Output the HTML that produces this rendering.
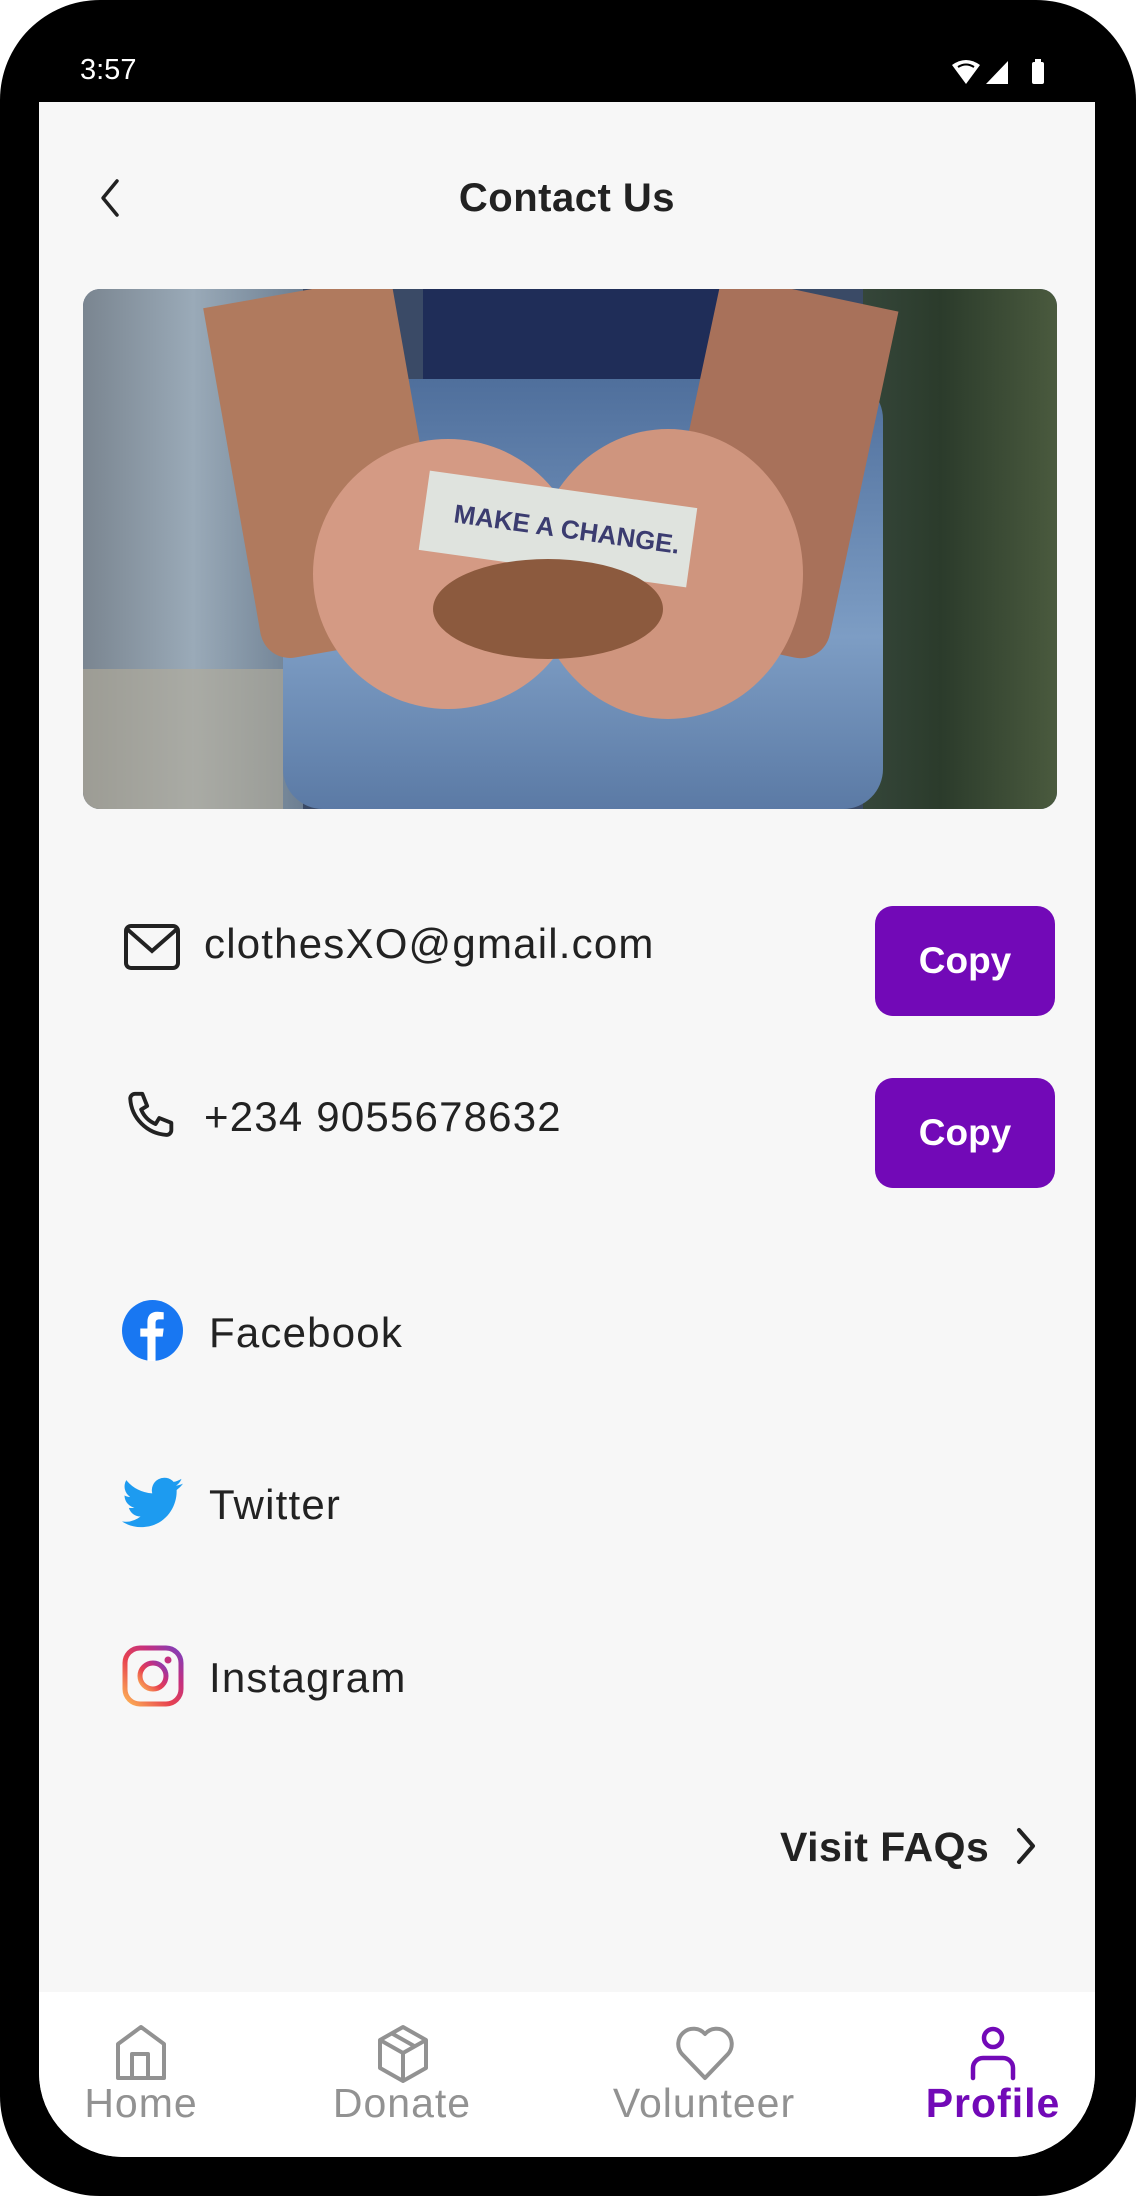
<!DOCTYPE html>
<html><head><meta charset="utf-8"><style>
*{margin:0;padding:0;box-sizing:border-box}
body{width:1136px;height:2196px;background:#fff;position:relative;overflow:hidden;font-family:"Liberation Sans",sans-serif;color:#222}
.phone{position:absolute;left:0;top:0;width:1136px;height:2196px;background:#000;border-radius:100px}
.screen{position:absolute;left:39px;top:102px;width:1056px;height:2055px;background:#f7f7f7;border-radius:0 0 84px 84px;overflow:hidden}
.abs{position:absolute}
.t{position:absolute;white-space:nowrap}
.row{font-size:42px;letter-spacing:1.2px}
.btn{position:absolute;left:836px;width:180px;height:110px;background:#7209b7;border-radius:18px;color:#fff;font-weight:bold;font-size:37px;display:flex;align-items:center;justify-content:center}
.nav{position:absolute;left:0;top:1890px;width:1056px;height:165px;background:#fff}
.lbl{position:absolute;top:2080px;font-size:41px;letter-spacing:1px;color:#929292;transform:translateX(-50%);white-space:nowrap}
</style></head><body>
<div class="phone"></div>
<div class="t" style="left:80px;top:54px;color:#fff;font-size:29px">3:57</div>
<svg class="abs" style="left:950px;top:58px" width="100" height="28" viewBox="0 0 100 28">
<path d="M2 7 Q16 -3 30 7 L16 26 Z" fill="#fff"/><path d="M8 9 Q16 4 24 9" stroke="#000" stroke-width="2" fill="none"/>
<path d="M36 26 L58 26 L58 3 Z" fill="#fff"/>
<rect x="82" y="4" width="12" height="22" rx="2" fill="#fff"/><rect x="85" y="1" width="6" height="4" fill="#fff"/>
</svg>
<div class="screen">
  <svg class="abs" style="left:56px;top:76px" width="30" height="40" viewBox="0 0 30 40"><path d="M22 3 L8 20 L22 37" stroke="#222" stroke-width="3.5" fill="none" stroke-linecap="round" stroke-linejoin="round"/></svg>
  <div class="t" style="left:0;width:1056px;text-align:center;top:74px;font-size:40px;font-weight:bold;color:#222;letter-spacing:.5px">Contact Us</div>
  <div class="abs" style="left:44px;top:187px;width:974px;height:520px;border-radius:17px;overflow:hidden;background:#3a4a66">
    <div class="abs" style="left:0;top:0;width:220px;height:520px;background:linear-gradient(90deg,#7a8590,#9aaab8 50%,#6d7f92)"></div>
    <div class="abs" style="left:0;top:380px;width:200px;height:140px;background:#b4ab98;opacity:.6"></div>
    <div class="abs" style="left:780px;top:0;width:194px;height:520px;background:linear-gradient(90deg,#35463a,#2b3b2b 40%,#4a5a3e)"></div>
    <div class="abs" style="left:340px;top:0;width:300px;height:160px;background:#1f2d58"></div>
    <div class="abs" style="left:200px;top:90px;width:600px;height:430px;background:linear-gradient(180deg,#4f6f9c,#7d9dc4 60%,#5b7aa5);border-radius:40px"></div>
    <div class="abs" style="left:150px;top:0;width:190px;height:360px;background:#b07a5e;border-radius:0 0 90px 30px;transform:rotate(-10deg)"></div>
    <div class="abs" style="left:600px;top:0;width:180px;height:360px;background:#a8715a;border-radius:0 0 30px 90px;transform:rotate(12deg)"></div>
    <div class="abs" style="left:230px;top:150px;width:270px;height:270px;background:#d49a84;border-radius:50%"></div>
    <div class="abs" style="left:450px;top:140px;width:270px;height:290px;background:#cf957e;border-radius:50%"></div>
    <div class="abs" style="left:340px;top:200px;width:270px;height:80px;background:#dfe3de;transform:rotate(8deg)"></div>
    <div class="t" style="left:370px;top:225px;font-size:26px;color:#3b3c70;font-weight:bold;transform:rotate(8deg)">MAKE A CHANGE.</div>
    <div class="abs" style="left:350px;top:270px;width:230px;height:100px;background:#8c5a3e;border-radius:50%"></div>
  </div>
  <svg class="abs" style="left:84px;top:821px" width="58" height="48" viewBox="0 0 58 48"><rect x="3" y="3" width="52" height="42" rx="5" fill="none" stroke="#222" stroke-width="4"/><path d="M4 6 L29 28 L54 6" fill="none" stroke="#222" stroke-width="4"/></svg>
  <div class="t row" style="left:165px;top:818px">clothesXO@gmail.com</div>
  <div class="btn" style="top:804px">Copy</div>
  <svg class="abs" style="left:84px;top:987px" width="58" height="58" viewBox="0 0 24 24"><path d="M5 2 h3 l2 5 -2.5 1.5 a11 11 0 0 0 6 6 L15 12 l5 2 v3 a2 2 0 0 1 -2 2 A16 16 0 0 1 3 4 a2 2 0 0 1 2 -2z" fill="none" stroke="#222" stroke-width="1.6" stroke-linejoin="round"/></svg>
  <div class="t row" style="left:165px;top:991px">+234 9055678632</div>
  <div class="btn" style="top:976px">Copy</div>
  <svg class="abs" style="left:83px;top:1198px" width="61" height="61" viewBox="0 0 60 60"><circle cx="30" cy="30" r="30" fill="#1877f2"/><path d="M33 60 V36 h7 l1-8 h-8 v-5 c0-3 1-4 4-4 h4 v-7 c-2 0-4-0.5-6-0.5 -7 0-10 4-10 10 v6.5 h-7 v8 h7 v24.5z" fill="#fff"/></svg>
  <div class="t row" style="left:170px;top:1207px">Facebook</div>
  <svg class="abs" style="left:83px;top:1375px" width="61" height="52" viewBox="0 0 24 20"><path d="M24 2.4c-.9.4-1.8.7-2.8.8 1-.6 1.8-1.6 2.2-2.7-1 .6-2 1-3.1 1.2A4.9 4.9 0 0 0 11.9 6.2 14 14 0 0 1 1.7 1a4.9 4.9 0 0 0 1.5 6.6c-.8 0-1.6-.2-2.2-.6 0 2.4 1.7 4.4 3.9 4.8-.7.2-1.5.2-2.2.1.6 2 2.4 3.4 4.6 3.4A9.9 9.9 0 0 1 0 17.3 14 14 0 0 0 7.5 19.5c9 0 14-7.5 14-14v-.6c1-.7 1.8-1.6 2.5-2.5z" fill="#1d9bf0"/></svg>
  <div class="t row" style="left:170px;top:1379px">Twitter</div>
  <svg class="abs" style="left:83px;top:1543px" width="62" height="62" viewBox="0 0 62 62"><defs><linearGradient id="ig" x1="0" y1="1" x2="1" y2="0"><stop offset="0" stop-color="#fdb555"/><stop offset=".4" stop-color="#e8434f"/><stop offset=".7" stop-color="#c4307f"/><stop offset="1" stop-color="#7b3fbf"/></linearGradient></defs><rect x="3" y="3" width="56" height="56" rx="15" fill="none" stroke="url(#ig)" stroke-width="5"/><circle cx="31" cy="31" r="13" fill="none" stroke="url(#ig)" stroke-width="5"/><circle cx="46" cy="15" r="3.5" fill="#c4307f"/></svg>
  <div class="t row" style="left:170px;top:1552px">Instagram</div>
  <div class="t" style="left:741px;top:1722px;font-size:41px;font-weight:bold;letter-spacing:.5px">Visit FAQs</div>
  <svg class="abs" style="left:972px;top:1724px" width="30" height="40" viewBox="0 0 30 40"><path d="M8 4 L22 20 L8 36" stroke="#222" stroke-width="4" fill="none" stroke-linecap="round" stroke-linejoin="round"/></svg>
  <div class="nav"></div>
  <svg class="abs" style="left:75px;top:1922px" width="54" height="60" viewBox="0 0 54 60"><path d="M4 54 V20 L27 3 L50 20 V54 Z M18 54 V30 H34 V54" fill="none" stroke="#929292" stroke-width="4" stroke-linejoin="round"/></svg>
  <svg class="abs" style="left:337px;top:1922px" width="54" height="60" viewBox="0 0 54 60"><path d="M27 3 L50 16 V44 L27 57 L4 44 V16 Z M4 16 L27 29 L50 16 M27 29 V57 M16 9.5 L39 22.5" fill="none" stroke="#929292" stroke-width="4" stroke-linejoin="round"/></svg>
  <svg class="abs" style="left:636px;top:1922px" width="60" height="58" viewBox="0 0 60 58"><path d="M30 54 L7 30 A13 13 0 0 1 30 10 A13 13 0 0 1 53 30 Z" fill="none" stroke="#929292" stroke-width="4" stroke-linejoin="round"/></svg>
  <svg class="abs" style="left:928px;top:1922px" width="52" height="60" viewBox="0 0 52 60"><circle cx="26" cy="14" r="9" fill="none" stroke="#7209b7" stroke-width="4.5"/><path d="M6 54 V44 A10 10 0 0 1 16 34 H36 A10 10 0 0 1 46 44 V54" fill="none" stroke="#7209b7" stroke-width="4.5" stroke-linecap="round"/></svg>
</div>
<div class="lbl" style="left:141px">Home</div>
<div class="lbl" style="left:402px">Donate</div>
<div class="lbl" style="left:704px">Volunteer</div>
<div class="lbl" style="left:993px;color:#7209b7;font-weight:bold">Profile</div>
</body></html>
